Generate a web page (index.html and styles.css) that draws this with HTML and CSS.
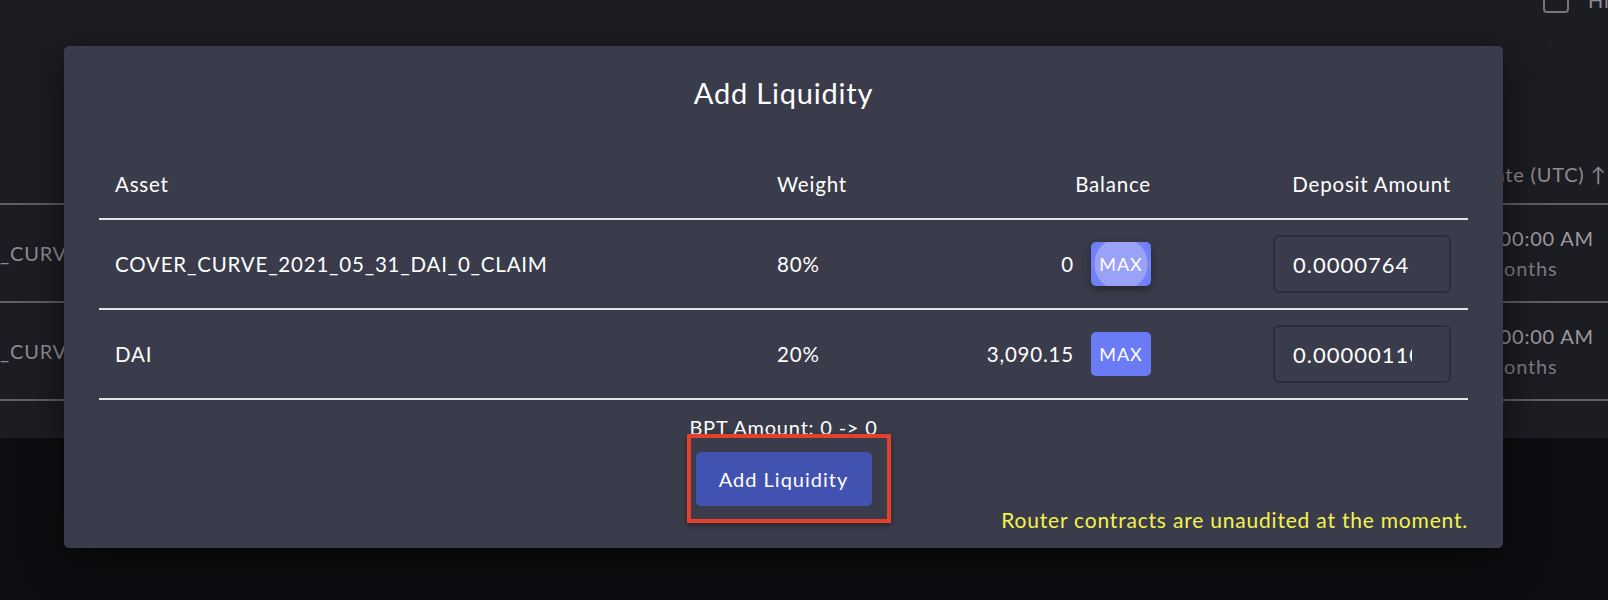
FILE: index.html
```html
<!DOCTYPE html>
<html>
<head>
<meta charset="utf-8">
<title>Add Liquidity</title>
<link rel="stylesheet" href="styles.css">
</head>
<body>
<div class="page">
  <div class="topbar">
    <div class="topbar-inner"><span class="cbox"></span><span class="topbar-label">Hide expired</span></div>
  </div>
  <div class="bg-table">
    <div class="bg-row bg-head">
      <div class="bg-c1"></div>
      <div class="bg-mid"></div>
      <div class="bg-c2"><span class="bg-h">Date (UTC) ↑</span></div>
    </div>
    <div class="bg-row">
      <div class="bg-c1"><span class="bg-asset">_CURVE</span></div>
      <div class="bg-mid"></div>
      <div class="bg-c2"><div class="d1">12:00:00 AM</div><div class="d2">in 3 months</div></div>
    </div>
    <div class="bg-row">
      <div class="bg-c1"><span class="bg-asset">_CURVE</span></div>
      <div class="bg-mid"></div>
      <div class="bg-c2"><div class="d1">12:00:00 AM</div><div class="d2">in 3 months</div></div>
    </div>
  </div>
</div>

<div class="modal">
  <h2 class="title">Add Liquidity</h2>
  <div class="tbl">
    <div class="tr th">
      <div class="cell">Asset</div>
      <div class="cell">Weight</div>
      <div class="cell right">Balance</div>
      <div class="cell right">Deposit Amount</div>
    </div>
    <div class="tr">
      <div class="cell">COVER_CURVE_2021_05_31_DAI_0_CLAIM</div>
      <div class="cell">80%</div>
      <div class="cell bal"><span>0</span><button class="max max-hover">MAX</button></div>
      <div class="cell dep"><input class="amount" type="text" value="0.0000764"></div>
    </div>
    <div class="tr">
      <div class="cell">DAI</div>
      <div class="cell">20%</div>
      <div class="cell bal"><span>3,090.15</span><button class="max">MAX</button></div>
      <div class="cell dep"><input class="amount" type="text" value="0.0000011010"></div>
    </div>
  </div>
  <div class="bpt">BPT Amount: 0 -&gt; 0</div>
  <div class="actions">
    <div class="btn-wrap">
      <button class="primary">Add Liquidity</button>
      <span class="highlight"></span>
    </div>
  </div>
  <div class="note">Router contracts are unaudited at the moment.</div>
</div>
</body>
</html>
```

FILE: styles.css
```css
html, body {
  margin: 0;
  padding: 0;
}
body {
  width: 1608px;
  height: 600px;
  overflow: hidden;
  position: relative;
  background: #0e0e12;
  font-family: Lato, "Liberation Sans", sans-serif;
  letter-spacing: 0.05em;
  color: #fff;
}

/* background page */
.page {
  height: 438px;
  background: #1c1c23;
  overflow: hidden;
}
.topbar {
  display: flex;
  justify-content: flex-end;
  height: 26px;
  margin-top: -13px;
}
.topbar-inner {
  width: 65px;
  display: flex;
  align-items: center;
  gap: 19px;
  white-space: nowrap;
  overflow: hidden;
}
.cbox {
  flex: none;
  width: 26px;
  height: 26px;
  box-sizing: border-box;
  border: 2px solid #76767b;
  border-radius: 4px;
}
.topbar-label {
  color: #8c8c90;
  font-size: 20px;
}
.bg-table {
  margin-top: 132px;
}
.bg-row {
  display: grid;
  grid-template-columns: 64px 1fr 105px;
  height: 96px;
  border-bottom: 2px solid #5f5f63;
  align-items: center;
  font-size: 20px;
  white-space: nowrap;
}
.bg-head {
  height: 58px;
}
.bg-c1 {
  overflow: hidden;
}
.bg-asset {
  color: #8d8d91;
  display: block;
  width: 64px;
  overflow: hidden;
}
.bg-c2 {
  line-height: 30px;
  overflow: hidden;
}
.bg-h {
  display: block;
  color: #8c8c90;
  margin-left: -24px;
}
.d1 {
  color: #9b9b9f;
  margin-left: -34px;
}
.d2 {
  color: #7b7b80;
  margin-left: -58px;
}

/* modal */
.modal {
  position: absolute;
  left: 64px;
  top: 46px;
  width: 1439px;
  height: 502px;
  box-sizing: border-box;
  padding: 32px 35px 0;
  background: #3b3c4b;
  border-radius: 5px;
  box-shadow: 0 12px 40px rgba(0, 0, 0, 0.55);
}
.title {
  margin: 0;
  font-size: 29px;
  font-weight: 400;
  line-height: 30px;
  text-align: center;
}
.tbl {
  margin-top: 48px;
}
.tr {
  display: grid;
  grid-template-columns: 662px 198px 208px 300px;
  height: 88px;
  align-items: center;
  border-bottom: 2px solid #e4e4e6;
  font-size: 20.5px;
  line-height: 24px;
}
.th {
  height: auto;
  padding: 16px 0 22px;
}
.cell {
  padding: 0 16px;
  white-space: nowrap;
}
.right {
  text-align: right;
}
.bal {
  display: flex;
  justify-content: flex-end;
  align-items: center;
  gap: 17px;
}
.max {
  width: 60px;
  height: 44px;
  border: none;
  border-radius: 5px;
  background: #6b7bf5;
  color: #fff;
  font-family: inherit;
  font-size: 18px;
  letter-spacing: 0.05em;
  padding: 0;
}
.max-hover {
  background: radial-gradient(circle at 50% 50%, #9aa2f8 0, #9aa2f8 26px, #7383f6 27px, #6b7bf5 100%);
  box-shadow: 0 3px 10px rgba(0, 0, 0, 0.4);
}
.dep {
  display: flex;
  justify-content: flex-end;
}
.amount {
  width: 178px;
  height: 58px;
  box-sizing: border-box;
  border: 2px solid #2c2d39;
  border-radius: 6px;
  background: transparent;
  color: #fff;
  font-family: inherit;
  font-size: 22px;
  letter-spacing: 1px;
  padding: 0 37px 0 18px;
  outline: none;
}
.bpt {
  margin-top: 15px;
  text-align: center;
  font-size: 20px;
  line-height: 24px;
}
.actions {
  display: flex;
  justify-content: center;
  margin-top: 13px;
}
.btn-wrap {
  position: relative;
}
.primary {
  display: block;
  width: 176px;
  height: 54px;
  border: none;
  border-radius: 5px;
  background: #4152b0;
  color: #fff;
  font-family: inherit;
  font-size: 20px;
  letter-spacing: 1px;
  padding: 0;
}
.highlight {
  position: absolute;
  left: -9px;
  top: -18px;
  width: 204px;
  height: 89px;
  box-sizing: border-box;
  border: 4px solid #e4402a;
  box-shadow: 0 2px 6px rgba(0, 0, 0, 0.45);
}
.note {
  margin-top: 2px;
  text-align: right;
  padding-right: 0;
  color: #f4f34c;
  font-size: 21px;
  line-height: 24px;
}
```
